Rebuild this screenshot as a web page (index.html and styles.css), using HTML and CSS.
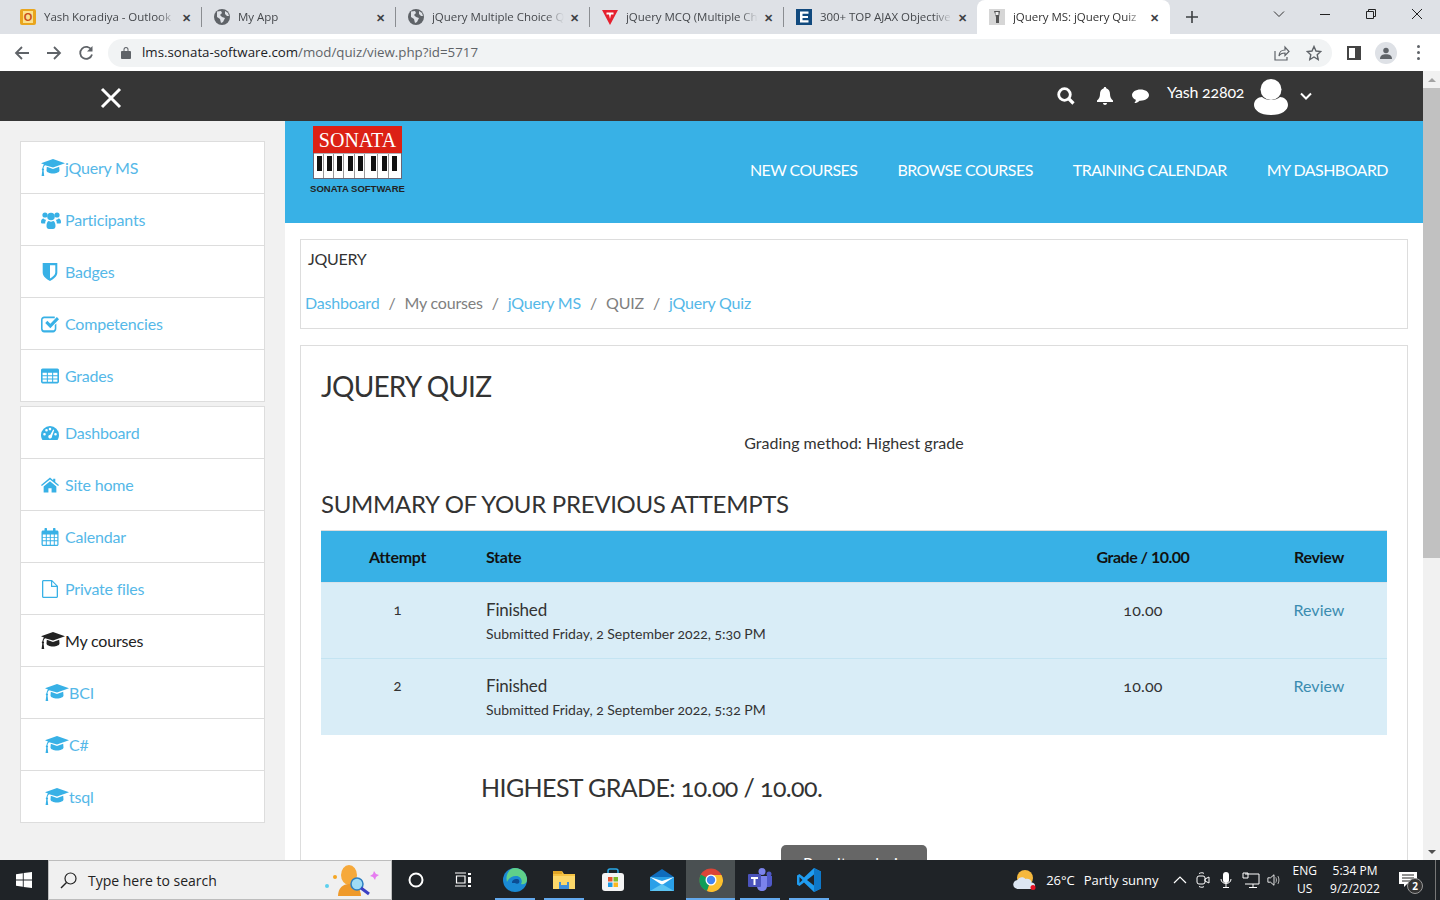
FILE: index.html
```html
<!DOCTYPE html>
<html lang="en">
<head>
    <meta charset="UTF-8">
    <title>jQuery MS: jQuery Quiz</title>
    <link rel="stylesheet" href="styles.css">
</head>
<body>
    <!-- Icon sprite -->
    <svg class="sprite">
        <symbol id="i-cap" viewBox="0 0 24 18"><path d="M12 0 0 4.200l3 1.200C1.900 6.500 1.600 8 1.500 9.300 1 9.600.8 10 .8 10.500c0 .4.200.8.500 1L.6 17h2.600l-.6-5.500c.3-.2.500-.6.500-1 0-.5-.2-.9-.6-1.100.1-1 .4-2.300 1.600-3.200L12 8.500l12-4.300zM12 10 5.800 7.700 5.500 11.500c0 1.600 3 3 6.500 3s6.500-1.400 6.500-3l-.3-3.800z"/></symbol>
        <symbol id="i-users" viewBox="0 0 20 18"><circle cx="4" cy="4" r="2.600"/><circle cx="16" cy="4" r="2.600"/><circle cx="10" cy="5.500" r="3.800"/><path d="M0 11c0-2 1-3.500 2.500-3.500.8.800 1.500 1.200 2.700 1.300-.6 1-1 2-1 3.700H1.500C.5 12.500 0 12 0 11zM20 11c0-2-1-3.500-2.500-3.500-.8.800-1.500 1.200-2.700 1.300.6 1 1 2 1 3.700h2.700c1 0 1.500-.5 1.500-1.500zM5.500 15c0-3 1-5 2.500-5 1.200 1 2.800 1 4 0 1.500 0 2.500 2 2.500 5 0 2-1 3-2.500 3H8c-1.500 0-2.500-1-2.500-3z"/></symbol>
        <symbol id="i-shield" viewBox="0 0 14 16"><path d="M.5 0h13v8.500c0 3.500-3.500 6-6.500 7.500C4 14.500.5 12 .5 8.500zM7 2v11.800c2.300-1.300 4.700-3.200 4.700-5.300V2z"/></symbol>
        <symbol id="i-check" viewBox="0 0 17 16"><path d="M3 1h10v1.500H3c-.8 0-1.500.7-1.500 1.500v8.500c0 .8.700 1.500 1.500 1.500h8.500c.8 0 1.500-.7 1.500-1.500V9l1.500-1.500v5C14.500 14.400 13 16 11.500 16H3c-1.700 0-3-1.500-3-3.500V4c0-1.700 1.300-3 3-3zM4 7l2-2 2.800 2.800L15 1.500l2 2L8.800 12z"/></symbol>
        <symbol id="i-table" viewBox="0 0 17 14"><path d="M1.500 0h14c.8 0 1.500.7 1.500 1.500v11c0 .8-.7 1.500-1.500 1.500h-14C.7 14 0 13.300 0 12.500v-11C0 .7.700 0 1.500 0zM1.500 4v2.200h4V4zm5 0v2.200h4V4zm5 0v2.200h4V4zm-10 3.200v2.100h4V7.200zm5 0v2.100h4V7.200zm5 0v2.100h4V7.200zm-10 3.100v2.200h4v-2.200zm5 0v2.200h4v-2.200zm5 0v2.200h4v-2.200z"/></symbol>
        <symbol id="i-gauge" viewBox="0 0 18 14"><path d="M9 0a9 9 0 0 1 9 9c0 2-.6 3.600-1.500 5h-15C.6 12.600 0 11 0 9a9 9 0 0 1 9-9zM3.500 7a1.300 1.300 0 1 0 0 2.600 1.300 1.300 0 0 0 0-2.600zM5.500 3a1.300 1.300 0 1 0 0 2.600 1.300 1.300 0 0 0 0-2.600zM9 1.800a1.300 1.300 0 1 0 0 2.600 1.300 1.300 0 0 0 0-2.600zM14.500 7a1.300 1.300 0 1 0 0 2.600 1.300 1.300 0 0 0 0-2.600zM12.200 3.500 9.300 8.800c-1.200 0-2 .8-2 1.900 0 1 .8 1.800 1.900 1.800s2-1 1.800-2.200l2.200-6.400z" fill-rule="evenodd"/></symbol>
        <symbol id="i-home" viewBox="0 0 17 14"><path d="M8.500 0l3 2.500V1h2v3.200L17 7l-.8 1-7.700-6.300L.8 8 0 7zM2.500 8.300l6-4.900 6 4.900V14H10v-4H7v4H2.500z"/></symbol>
        <symbol id="i-cal" viewBox="0 0 17 18"><path d="M1.500 2.500H3V1a1 1 0 0 1 2.500 0v1.500h6V1A1 1 0 0 1 14 1v1.500h1.500c.8 0 1.500.7 1.500 1.500v12.500c0 .8-.7 1.500-1.500 1.500h-14C.7 18 0 17.300 0 16.500V4c0-.8.700-1.500 1.500-1.500zM1.300 6.500v2.400h3V6.500zm4 0v2.400h3V6.500zm4 0v2.400h3V6.500zm4 0v2.400h2.500V6.500zm-12 3.300v2.500h3V9.800zm4 0v2.500h3V9.800zm4 0v2.500h3V9.800zm4 0v2.500h2.500V9.800zm-12 3.400v3.500h3v-3.500zm4 0v3.500h3v-3.500zm4 0v3.500h3v-3.500zm4 0v3.500h2.500v-3.500z" fill-rule="evenodd"/></symbol>
        <symbol id="i-file" viewBox="0 0 16 18"><path d="M1.500 0H10l6 6v10.500c0 .8-.7 1.500-1.500 1.500h-13C.7 18 0 17.300 0 16.500v-15C0 .7.700 0 1.500 0zm0 1.300c-.1 0-.2.100-.2.200v15c0 .1.100.2.200.2h13c.1 0 .2-.1.200-.2V7H9V1.300zm8.700.4v4h4z" fill-rule="evenodd"/></symbol>
        <symbol id="i-globe" viewBox="0 0 16 16"><circle cx="8" cy="8" r="8" fill="#5f6368"/><path d="M3 2.500 7 2l1 2-2 2 2 2 3 1-2 4-2 1-1-4-3-2zM11 2l3 2 1 3-2 0-2-2z" fill="#dee1e6"/></symbol>
    </svg>

    <!-- Browser tabs -->
    <div class="tabstrip">
        <div class="tab">
            <svg class="favicon" viewBox="0 0 16 16"><rect width="16" height="16" rx="2" fill="#e9a51d"/><rect x="3" y="2" width="10" height="12" fill="#fbe08b"/><text x="8" y="12" text-anchor="middle" class="fav-o">O</text></svg>
            <span class="tab-title">Yash Koradiya - Outlook</span><span class="tab-x">✕</span>
        </div>
        <div class="tab">
            <svg class="favicon"><use href="#i-globe"/></svg>
            <span class="tab-title">My App</span><span class="tab-x">✕</span>
        </div>
        <div class="tab">
            <svg class="favicon"><use href="#i-globe"/></svg>
            <span class="tab-title">jQuery Multiple Choice Q</span><span class="tab-x">✕</span>
        </div>
        <div class="tab">
            <svg class="favicon" viewBox="0 0 16 16"><path d="M0 1h16L8 16z" fill="#e5202e"/><path d="M4.500 3.500h7v2H9L8 10 7 5.500H4.500z" fill="#fff"/></svg>
            <span class="tab-title">jQuery MCQ (Multiple Ch</span><span class="tab-x">✕</span>
        </div>
        <div class="tab no-sep">
            <svg class="favicon" viewBox="0 0 16 16"><rect width="16" height="16" fill="#114a7e"/><path d="M4 2.500h8.500v2.200H6.500v2.200h5.500v2.200H6.500v2.200h6v2.200H4z" fill="#fff"/></svg>
            <span class="tab-title">300+ TOP AJAX Objective</span><span class="tab-x">✕</span>
        </div>
        <div class="tab active">
            <svg class="favicon" viewBox="0 0 16 16"><rect width="16" height="16" fill="#d6d6d6"/><path d="M5 2h6l-1 6v6H7V8z" fill="#555"/><rect x="6.500" y="3" width="3" height="3" fill="#eee"/></svg>
            <span class="tab-title">jQuery MS: jQuery Quiz</span><span class="tab-x">✕</span>
        </div>
        <svg class="newtab" viewBox="0 0 12 12"><path d="M6 0v12M0 6h12" stroke="#3c4043" stroke-width="1.600"/></svg>
        <div class="win-controls">
            <svg viewBox="0 0 12 12"><path d="M1 3.500 6 8.500l5-5" fill="none" stroke="#333"/></svg>
            <svg viewBox="0 0 12 12"><path d="M1 6.500h10" stroke="#222"/></svg>
            <svg viewBox="0 0 12 12"><path d="M1.500 3.500h7v7h-7zM3.500 3.500v-2h7v7h-2" fill="none" stroke="#222"/></svg>
            <svg viewBox="0 0 12 12"><path d="M1 1l10 10M11 1 1 11" stroke="#222"/></svg>
        </div>
    </div>

    <!-- Address bar -->
    <div class="toolbar">
        <svg class="tool" viewBox="0 0 16 16"><path d="M15 8H2M8 2 2 8l6 6" fill="none" stroke="#5f6368" stroke-width="1.800"/></svg>
        <svg class="tool" viewBox="0 0 16 16"><path d="M1 8h13M8 2l6 6-6 6" fill="none" stroke="#5f6368" stroke-width="1.800"/></svg>
        <svg class="tool" viewBox="0 0 16 16"><path d="M13.500 5A6 6 0 1 0 14 9.500" fill="none" stroke="#5f6368" stroke-width="1.800"/><path d="M14.500 1v5.500H9z" fill="#5f6368"/></svg>
        <div class="omnibox">
            <svg class="lock" viewBox="0 0 10 13"><path d="M2.500 5V3.500a2.500 2.500 0 0 1 5 0V5H9c.5 0 1 .5 1 1v6c0 .5-.5 1-1 1H1c-.5 0-1-.5-1-1V6c0-.5.500-1 1-1zm1 0h3V3.500a1.500 1.500 0 0 0-3 0z" fill="#5f6368"/></svg>
            <span class="url"><b>lms.sonata-software.com</b>/mod/quiz/view.php?id=5717</span>
            <svg class="omni-icon share" viewBox="0 0 16 16"><path d="M1 6v9h12v-3M5 11c0-4 3-6 6-6V2l4 4.500-4 4V8c-3 0-5 1-6 3z" fill="none" stroke="#5f6368" stroke-width="1.200"/></svg>
            <svg class="omni-icon" viewBox="0 0 16 16"><path d="M8 1.500l2 4.500 4.800.5-3.600 3.200 1 4.800L8 12l-4.200 2.500 1-4.800L1.200 6.500 6 6z" fill="none" stroke="#5f6368" stroke-width="1.400"/></svg>
        </div>
        <svg class="panel" viewBox="0 0 14 14"><path d="M0 0h14v14H0zM2 2v10h6V2z" fill="#444" fill-rule="evenodd"/></svg>
        <div class="profile"><svg viewBox="0 0 14 14"><circle cx="7" cy="4" r="3.200" fill="#5f6368"/><path d="M0 14c0-4 3-5.500 7-5.500s7 1.500 7 5.500z" fill="#5f6368"/></svg></div>
        <div class="kebab"><i></i><i></i><i></i></div>
    </div>

    <!-- Page in the browser window -->
    <div class="viewport">
        <div class="page">
            <div class="topbar">
                <svg class="close-nav" viewBox="0 0 22 22"><path d="M2 2l18 18M20 2 2 20" stroke="#fff" stroke-width="3"/></svg>
                <div class="user-menu">
                    <svg class="top-icon" viewBox="0 0 18 18"><circle cx="7.500" cy="7.500" r="5.800" fill="none" stroke="#fff" stroke-width="2.800"/><path d="M11.500 11.500 16.500 16.500" stroke="#fff" stroke-width="3.200"/></svg>
                    <svg class="top-icon bell" viewBox="0 0 16 18"><path d="M8 0c.8 0 1.200.5 1.200 1.200C12 2 13 4.500 13 7c0 3 1 5 3 6.500V15H0v-1.500C2 12 3 10 3 7c0-2.500 1-5 3.800-5.800C6.800.5 7.200 0 8 0zM6 16h4c0 1.200-1 2-2 2s-2-.8-2-2z" fill="#fff"/></svg>
                    <svg class="top-icon chat" viewBox="0 0 18 16"><path d="M9 1c5 0 9 2.500 9 6s-4 6-9 6h-1c-1.500 1.500-3.500 2.500-5.500 2.500C3.500 14.500 4 13.500 4 12 1.500 11 0 9.200 0 7c0-3.500 4-6 9-6z" fill="#fff"/></svg>
                    <span class="user-name">Yash 22802</span>
                    <svg class="avatar" viewBox="0 0 34 36"><circle cx="17" cy="10.500" r="10.500" fill="#fff"/><path d="M0 26c0-5 4-8 8-8 2 2 5.500 3 9 3s7-1 9-3c4 0 8 3 8 8s-6 10-17 10S0 31 0 26z" fill="#fff"/></svg>
                    <svg class="caret" viewBox="0 0 12 8"><path d="M1 1.500l5 5 5-5" fill="none" stroke="#fff" stroke-width="2"/></svg>
                </div>
            </div>

            <div class="page-body">
                <aside class="sidebar">
                    <ul class="nav-block">
                        <li class="nav-item"><svg class="ni cap"><use href="#i-cap"/></svg>jQuery MS</li>
                        <li class="nav-item"><svg class="ni users"><use href="#i-users"/></svg><span class="gap">Participants</span></li>
                        <li class="nav-item"><svg class="ni"><use href="#i-shield"/></svg><span class="gap">Badges</span></li>
                        <li class="nav-item"><svg class="ni"><use href="#i-check"/></svg><span class="gap">Competencies</span></li>
                        <li class="nav-item"><svg class="ni"><use href="#i-table"/></svg><span class="gap">Grades</span></li>
                    </ul>
                    <ul class="nav-block">
                        <li class="nav-item"><svg class="ni"><use href="#i-gauge"/></svg><span class="gap">Dashboard</span></li>
                        <li class="nav-item"><svg class="ni"><use href="#i-home"/></svg><span class="gap">Site home</span></li>
                        <li class="nav-item"><svg class="ni"><use href="#i-cal"/></svg><span class="gap">Calendar</span></li>
                        <li class="nav-item"><svg class="ni"><use href="#i-file"/></svg><span class="gap">Private files</span></li>
                        <li class="nav-item dark"><svg class="ni cap"><use href="#i-cap"/></svg>My courses</li>
                        <li class="nav-item sub"><svg class="ni cap"><use href="#i-cap"/></svg>BCI</li>
                        <li class="nav-item sub"><svg class="ni cap"><use href="#i-cap"/></svg>C#</li>
                        <li class="nav-item sub"><svg class="ni cap"><use href="#i-cap"/></svg>tsql</li>
                    </ul>
                </aside>

                <div class="content">
                    <div class="hero">
                        <div class="logo">
                            <div class="logo-red">SONATA</div>
                            <svg class="logo-keys" viewBox="0 0 89 26"><rect x=".5" width="88" height="25.500" fill="#fff" stroke="#667"/><path d="M10.500 1v24M20.500 1v24M30.500 1v24M41.500 1v24M51.500 1v24M64.500 1v24M75.500 1v24" stroke="#999"/><path d="M4 3h5v15H4zM14 3h5v15h-5zM24 3h5v15h-5zM35 3h5v15h-5zM45 3h5v15h-5zM58 3h5v15h-5zM69 3h5v15h-5zM79 3h5v15h-5z" fill="#111"/></svg>
                            <div class="logo-name">SONATA SOFTWARE</div>
                        </div>
                        <nav class="main-nav">
                            <a>NEW COURSES</a>
                            <a>BROWSE COURSES</a>
                            <a>TRAINING CALENDAR</a>
                            <a>MY DASHBOARD</a>
                        </nav>
                    </div>

                    <div class="crumb-box">
                        <div class="course-name">JQUERY</div>
                        <div class="crumbs">
                            <a>Dashboard</a><span class="sep">/</span><span>My courses</span><span class="sep">/</span><a>jQuery MS</a><span class="sep">/</span><span>QUIZ</span><span class="sep">/</span><a>jQuery Quiz</a>
                        </div>
                    </div>

                    <div class="main-box">
                        <h2 class="quiz-title">JQUERY QUIZ</h2>
                        <p class="method">Grading method: Highest grade</p>
                        <h3 class="summary-title">SUMMARY OF YOUR PREVIOUS ATTEMPTS</h3>
                        <table class="attempts">
                            <thead>
                                <tr>
                                    <th class="c-attempt">Attempt</th>
                                    <th class="c-state">State</th>
                                    <th class="c-grade">Grade / 10.00</th>
                                    <th class="c-review">Review</th>
                                </tr>
                            </thead>
                            <tbody>
                                <tr>
                                    <td class="c-attempt">1</td>
                                    <td class="c-state">Finished<span class="when">Submitted Friday, 2 September 2022, 5:30 PM</span></td>
                                    <td class="c-grade">10.00</td>
                                    <td class="c-review"><a>Review</a></td>
                                </tr>
                                <tr>
                                    <td class="c-attempt">2</td>
                                    <td class="c-state">Finished<span class="when">Submitted Friday, 2 September 2022, 5:32 PM</span></td>
                                    <td class="c-grade">10.00</td>
                                    <td class="c-review"><a>Review</a></td>
                                </tr>
                            </tbody>
                        </table>
                        <h3 class="highest">HIGHEST GRADE: 10.00 / 10.00.</h3>
                        <div class="result-wrap"><button class="result-btn">Result analysis</button></div>
                    </div>
                </div>
            </div>
        </div>
        <div class="scrollbar">
            <div class="sb-btn"><i class="arrow-up"></i></div>
            <div class="sb-thumb"></div>
            <div class="sb-btn"><i class="arrow-down"></i></div>
        </div>
    </div>

    <!-- Windows taskbar -->
    <div class="taskbar">
        <svg class="start" viewBox="0 0 16 16"><path d="M0 2.200 6.800 1.200v6.300H0zM7.700 1.100 16 0v7.500H7.700zM0 8.400h6.800v6.400L0 13.800zM7.700 8.400H16V16l-8.300-1.100z" fill="#fff"/></svg>
        <div class="searchbox">
            <svg class="search-glass" viewBox="0 0 17 17"><circle cx="10.500" cy="6.500" r="5.500" fill="none" stroke="#222" stroke-width="1.200"/><path d="M6.500 10.500 1 16" stroke="#222" stroke-width="1.500"/></svg>
            <span>Type here to search</span>
            <svg class="search-art" viewBox="0 0 56 32"><circle cx="3" cy="22" r="2" fill="#5cd0ee"/><circle cx="11" cy="13" r="2" fill="#f5a623"/><path d="M50 7l2 3 3 1-3 2-1 3-2-3-3-1 3-2z" fill="#e67cf0"/><ellipse cx="25" cy="11" rx="8" ry="10" fill="#f6a93b"/><path d="M14 32c0-8 5-12 11-12s12 4 12 12z" fill="#ef9a2b"/><circle cx="33" cy="20" r="6" fill="#9fdcf5" stroke="#2d7fc1" stroke-width="1.500"/><path d="M37 24l8 6" stroke="#3b3fc4" stroke-width="3"/></svg>
        </div>
        <svg class="tb-plain" viewBox="0 0 16 16"><circle cx="8" cy="8" r="6.500" fill="none" stroke="#fff" stroke-width="2"/></svg>
        <svg class="tb-plain" viewBox="0 0 16 16"><path d="M0 1h11M0 14h11M1.500 4h8.500v7H1.500z" fill="none" stroke="#fff" stroke-width="1.200"/><path d="M13 1h3v2h-3zM13 5h3v6h-3zM13 13h3v2h-3z" fill="#fff"/></svg>
        <div class="tb-apps">
            <div class="tb-app open">
                <svg viewBox="0 0 24 24"><circle cx="12" cy="12" r="12" fill="#1a8ad4"/><path d="M12 0a12 12 0 0 1 12 12c0 3-3 5-6 4 2-3 0-8-5-8C8 8 5 11 4 14 2 7 6 0 12 0z" fill="#5fd08a"/><path d="M9 15c0-3 2-4 5-4 2 0 3 2 2 4-1 1-3 1-4 0z" fill="#0c4d92"/></svg>
            </div>
            <div class="tb-app open">
                <svg viewBox="0 0 24 24"><path d="M1 3h9l2 3h11v15H1z" fill="#f5c242"/><path d="M1 3h9v3H1z" fill="#e0a526"/><path d="M1 8h22v13H1z" fill="#fcd86a"/><path d="M7 14h10v7H7z" fill="#3f8edb"/><path d="M9 14h6v3H9z" fill="#fcd86a"/></svg>
            </div>
            <div class="tb-app">
                <svg viewBox="0 0 24 24"><path d="M7 6V3c0-1 1-2 2-2h6c1 0 2 1 2 2v3" fill="none" stroke="#29a9e8" stroke-width="1.500"/><rect x="1" y="5" width="22" height="18" rx="3" fill="#f4f4f4"/><rect x="7" y="9" width="4.500" height="4.500" fill="#e8542f"/><rect x="12.500" y="9" width="4.500" height="4.500" fill="#7fba2a"/><rect x="7" y="14.500" width="4.500" height="4.500" fill="#1d9be8"/><rect x="12.500" y="14.500" width="4.500" height="4.500" fill="#fbb820"/></svg>
            </div>
            <div class="tb-app">
                <svg viewBox="0 0 24 24"><path d="M0 9 12 1l12 8v3H0z" fill="#0f6cbd"/><path d="M0 9h24v14H0z" fill="#2aa0e8"/><path d="M0 9l12 8 12-8-12 4z" fill="#fff"/><path d="M0 23 12 16l12 7z" fill="#5cc4f2"/></svg>
            </div>
            <div class="tb-app active open">
                <svg viewBox="0 0 24 24"><circle cx="12" cy="12" r="11.500" fill="#db4437"/><path d="M12 12 1.900 6.400A11.500 11.500 0 0 0 8 23z" fill="#0f9d58"/><path d="M12 12 8 23A11.500 11.500 0 0 0 22.500 7H12z" fill="#fbc02d"/><circle cx="12" cy="12" r="5.500" fill="#fff"/><circle cx="12" cy="12" r="4.200" fill="#4285f4"/></svg>
            </div>
            <div class="tb-app open">
                <svg viewBox="0 0 24 24"><circle cx="14" cy="3.500" r="3.500" fill="#7b83eb"/><circle cx="21" cy="6" r="2.500" fill="#5059c9"/><path d="M9 8h10v10c0 3-2 5-5 5s-5-2-5-5z" fill="#7b83eb"/><path d="M19 8h5v8c0 2-1.500 3-3 3h-2z" fill="#5059c9"/><rect x="0" y="6" width="13" height="13" rx="1" fill="#4b53bc"/><path d="M3 9h7v2H7.500v6h-2v-6H3z" fill="#fff"/></svg>
            </div>
            <div class="tb-app open">
                <svg viewBox="0 0 24 24"><path d="M17 0l7 3.500v17L17 24 7 14.500 2.500 18 0 16.500v-9L2.500 6 7 9.500z" fill="#1f9cf0"/><path d="M17 0l7 3.500v17L17 24z" fill="#0e78c9"/><path d="M17 6.500v11L10 12z" fill="#202428"/><path d="M2.500 9v6l3-3z" fill="#202428"/></svg>
            </div>
        </div>
        <div class="tray">
            <svg class="weather" viewBox="0 0 24 22"><circle cx="12" cy="9" r="8" fill="#f5b83d"/><path d="M5 20a4.500 4.500 0 0 1-.5-9c1-3 6-4 8-1 3-1 6 1 6 3.500 2.500 0 4 2 3.500 4s-2 2.500-3 2.500z" fill="#dce6f2"/><circle cx="20" cy="18.500" r="2.500" fill="#e81123"/></svg>
            <span class="temp">26°C</span>
            <span class="sky">Partly sunny</span>
            <svg class="tray-i up" viewBox="0 0 14 14"><path d="M1 10l6-6 6 6" fill="none" stroke="#fff" stroke-width="1.200"/></svg>
            <svg class="tray-i" viewBox="0 0 14 16"><rect x="1" y="4" width="8" height="8" rx="2" fill="none" stroke="#fff"/><path d="M9 7l4-2v6l-4-2zM3 1.500c2-1 4-1 5 0M3 14.500c2 1 4 1 5 0" fill="none" stroke="#fff"/></svg>
            <svg class="tray-i" viewBox="0 0 14 16"><rect x="4" y="0" width="6" height="11" rx="3" fill="#fff"/><path d="M2 7c0 6 10 6 10 0M7 12v3M4 15.500h6" fill="none" stroke="#fff"/></svg>
            <svg class="tray-i wide" viewBox="0 0 18 16"><path d="M3 2h14v10H3M11 12v3M7 15.500h8M1 1h5v5H1z" fill="none" stroke="#fff"/></svg>
            <svg class="tray-i" viewBox="0 0 16 16"><path d="M1 5.500h3L8 2v12l-4-3.500H1z" fill="none" stroke="#fff"/><path d="M10 5c1 2 1 4 0 6M12.500 3.500c1.500 3 1.500 6 0 9" fill="none" stroke="#ccc"/></svg>
            <div class="lang">ENG<br>US</div>
            <div class="clock">5:34 PM<br>9/2/2022</div>
            <div class="notify">
                <svg viewBox="0 0 18 16"><path d="M0 0h18v12H8l-3 3v-3H0z" fill="#fff"/><path d="M3 3h12M3 6h12M3 9h8" stroke="#222"/></svg>
                <span class="notify-count">2</span>
            </div>
            <div class="desk-line"></div>
        </div>
    </div>
</body>
</html>
```

FILE: styles.css
```css
* {
    box-sizing: border-box;
}
body {
    margin: 0;
    height: 900px;
    overflow: hidden;
    display: flex;
    flex-direction: column;
    font-family: Lato, "Open Sans", sans-serif;
    color: #333;
    background-color: #fff;
}
.sprite {
    display: none;
}

/* browser tabs */
.tabstrip {
    height: 34px;
    flex-shrink: 0;
    background-color: #dee1e6;
    display: flex;
    align-items: center;
    padding-left: 8px;
    font-family: "Open Sans", sans-serif;
    font-size: 11.5px;
    letter-spacing: -0.05px;
    color: #45484c;
}
.tab {
    width: 194px;
    height: 34px;
    padding-left: 12px;
    display: flex;
    align-items: center;
    flex-shrink: 0;
}
.tab::after {
    content: "";
    width: 1px;
    height: 20px;
    margin-left: 5px;
    background-color: #8a8d91;
    flex-shrink: 0;
}
.tab.no-sep::after {
    background-color: transparent;
}
.tab.active {
    margin-left: -1px;
    width: 193px;
    background-color: #fff;
    border-radius: 8px 8px 0 0;
    color: #333;
}
.tab.active::after {
    background-color: transparent;
}
.favicon {
    width: 16px;
    height: 16px;
    flex-shrink: 0;
    margin-right: 8px;
}
.fav-o {
    font-family: "Liberation Sans", sans-serif;
    font-size: 11px;
    font-weight: bold;
    fill: #c8501a;
}
.tab-title {
    flex: 1;
    min-width: 0;
    padding-bottom: 2px;
    white-space: nowrap;
    overflow: hidden;
    -webkit-mask-image: linear-gradient(to left, transparent 0, #000 18px);
    mask-image: linear-gradient(to left, transparent 0, #000 18px);
}
.tab-x {
    width: 20px;
    text-align: center;
    font-size: 11px;
    font-weight: bold;
    color: #3c4043;
    flex-shrink: 0;
}
.newtab {
    width: 12px;
    height: 12px;
    margin-left: 16px;
    flex-shrink: 0;
}
.win-controls {
    margin-left: auto;
    display: flex;
    align-items: center;
    gap: 34px;
    padding-right: 17px;
    height: 28px;
    align-self: flex-start;
}
.win-controls svg {
    width: 12px;
    height: 12px;
}

/* address bar */
.toolbar {
    height: 37px;
    flex-shrink: 0;
    display: flex;
    align-items: center;
    padding-left: 14px;
    background-color: #fff;
}
.tool {
    width: 16px;
    height: 16px;
    margin-right: 16px;
    flex-shrink: 0;
}
.omnibox {
    width: 1224px;
    height: 28px;
    margin-left: -2px;
    border-radius: 14px;
    background-color: #f1f3f4;
    display: flex;
    align-items: center;
    padding: 0 10px 0 13px;
    flex-shrink: 0;
}
.lock {
    width: 10px;
    height: 13px;
    margin-right: 11px;
}
.url {
    flex: 1;
    padding-bottom: 2px;
    font-family: "Open Sans", sans-serif;
    font-size: 13.3px;
    color: #5f6368;
}
.url b {
    font-weight: normal;
    color: #202124;
}
.omni-icon {
    width: 16px;
    height: 16px;
}
.omni-icon.share {
    margin-right: 16px;
}
.panel {
    width: 14px;
    height: 14px;
    margin-left: 15px;
}
.profile {
    width: 22px;
    height: 22px;
    margin-left: 14px;
    border-radius: 50%;
    background-color: #dee1e6;
    display: flex;
    align-items: center;
    justify-content: center;
}
.profile svg {
    width: 12px;
    height: 12px;
}
.kebab {
    margin-left: 20px;
    display: flex;
    flex-direction: column;
    gap: 3px;
}
.kebab i {
    width: 3px;
    height: 3px;
    border-radius: 50%;
    background-color: #5f6368;
}

/* page */
.viewport {
    flex: 1;
    min-height: 0;
    display: flex;
    overflow: hidden;
}
.page {
    width: 1423px;
    flex-shrink: 0;
    overflow: hidden;
}
.scrollbar {
    width: 17px;
    background-color: #f1f1f1;
    display: flex;
    flex-direction: column;
}
.sb-btn {
    height: 17px;
    display: flex;
    align-items: center;
    justify-content: center;
}
.sb-btn:last-child {
    margin-top: auto;
}
.sb-thumb {
    height: 470px;
    background-color: #c1c1c1;
}
.arrow-up,
.arrow-down {
    width: 0;
    height: 0;
    border-left: 4px solid transparent;
    border-right: 4px solid transparent;
}
.arrow-up {
    border-bottom: 4px solid #a3a3a3;
}
.arrow-down {
    border-top: 4px solid #505050;
}
.topbar {
    height: 50px;
    background-color: #363636;
    display: flex;
    align-items: center;
    padding-left: 100px;
}
.close-nav {
    width: 22px;
    height: 22px;
    margin-top: 4px;
}
.user-menu {
    margin-left: auto;
    display: flex;
    align-items: center;
    padding-right: 111px;
    color: #fff;
}
.top-icon {
    width: 18px;
    height: 18px;
    margin-right: 22px;
}
.bell {
    width: 16px;
    margin-right: 19px;
}
.chat {
    margin-right: 18px;
    width: 17px;
}
.user-name {
    font-size: 16px;
    font-variant-numeric: oldstyle-nums;
    letter-spacing: -0.2px;
    width: 87px;
    margin-top: -9px;
    white-space: nowrap;
}
.avatar {
    width: 34px;
    height: 36px;
    margin-top: 2px;
}
.caret {
    width: 12px;
    height: 8px;
    margin-left: 12px;
}
.page-body {
    display: flex;
}

/* sidebar */
.sidebar {
    width: 285px;
    flex-shrink: 0;
    background-color: #f1f1f1;
    padding: 20px 20px 40px;
}
.nav-block {
    list-style: none;
    margin: 0 0 4px;
    padding: 0;
    background-color: #fff;
    border: 1px solid #ddd;
}
.nav-item {
    height: 52px;
    display: flex;
    align-items: center;
    padding-left: 20px;
    border-bottom: 1px solid #ddd;
    font-size: 16px;
    color: #55b8e8;
    letter-spacing: -0.2px;
    fill: #38b1e6;
}
.nav-item:last-child {
    border-bottom: none;
    height: 51px;
}
.nav-item.dark {
    color: #222;
    fill: #222;
}
.nav-item.sub {
    padding-left: 24px;
}
.ni {
    width: 18px;
    height: 18px;
    flex-shrink: 0;
}
.ni.cap {
    width: 24px;
}
.ni.users {
    width: 20px;
    margin-right: -2px;
}
.gap {
    margin-left: 6px;
}

/* hero */
.content {
    flex: 1;
    min-width: 0;
    background-color: #fff;
}
.hero {
    height: 102px;
    background-color: #38b1e6;
    display: flex;
    align-items: flex-start;
    padding: 5px 35px 0 25px;
}
.logo {
    width: 95px;
    display: flex;
    flex-direction: column;
    align-items: center;
}
.logo-red {
    width: 89px;
    height: 27px;
    background-color: #dc2115;
    color: #fff;
    font-family: "Liberation Serif", serif;
    font-size: 20px;
    line-height: 28px;
    text-align: center;
}
.logo-keys {
    width: 89px;
    height: 26px;
    display: block;
}
.logo-name {
    margin-top: 4px;
    font-family: "Liberation Sans", sans-serif;
    font-size: 9.5px;
    font-weight: bold;
    color: #222;
    white-space: nowrap;
}
.main-nav {
    margin-left: auto;
    margin-top: 32px;
    display: flex;
    gap: 40px;
}
.main-nav a {
    color: #fff;
    font-size: 16px;
    line-height: 24px;
    letter-spacing: -0.55px;
    white-space: nowrap;
}

/* breadcrumb */
.crumb-box {
    margin: 16px 15px 16px;
    height: 90px;
    border: 1px solid #ddd;
    padding: 8px 4px;
}
.course-name {
    font-size: 16px;
    line-height: 22px;
    color: #333;
    padding-left: 3px;
    letter-spacing: -0.3px;
}
.crumbs {
    margin-top: 21px;
    font-size: 16px;
    line-height: 24px;
    color: #808080;
    letter-spacing: -0.2px;
}
.crumbs a {
    color: #55b8e8;
}
.sep {
    margin: 0 9px;
}

/* quiz box */
.main-box {
    margin: 0 15px;
    border: 1px solid #ddd;
    padding: 23px 20px 0;
}
.quiz-title {
    margin: 0;
    font-size: 28px;
    line-height: 34px;
    font-weight: normal;
    color: #333;
    letter-spacing: -0.8px;
}
.method {
    margin: 29px 0 0;
    font-size: 16px;
    line-height: 22px;
    text-align: center;
}
.summary-title {
    margin: 34px 0 0;
    font-size: 24px;
    line-height: 32px;
    font-weight: normal;
    letter-spacing: -0.3px;
    white-space: nowrap;
}
.attempts {
    margin-top: 10px;
    width: 1066px;
    table-layout: fixed;
    border-collapse: collapse;
    font-size: 16px;
    color: #333;
}
.attempts th {
    height: 52px;
    background-color: #38b1e6;
    color: #111;
    font-weight: bold;
    letter-spacing: -0.3px;
    border-top: 1px solid #ddd;
    border-bottom: 1px solid #d8e2ea;
}
.attempts td {
    height: 76px;
    background-color: #d9edf7;
    border-bottom: 1px solid #c4e4f2;
    text-align: center;
    vertical-align: top;
    padding-top: 17px;
    font-size: 15px;
    font-variant-numeric: oldstyle-nums;
}
.attempts tr:last-child td {
    border-bottom: none;
}
.attempts .c-attempt {
    width: 153px;
}
.attempts .c-state {
    width: 561px;
    text-align: left;
    padding-left: 12px;
}
.attempts td.c-state {
    padding-top: 16px;
    font-size: 17px;
    line-height: 22px;
    letter-spacing: -0.2px;
}
.attempts .c-grade {
    width: 216px;
}
.attempts th.c-grade {
    letter-spacing: -0.5px;
}
.attempts td.c-grade {
    font-size: 16px;
    letter-spacing: 0.2px;
}
.attempts .c-review {
    width: 136px;
}
.attempts .c-review a {
    color: #3b8cb0;
    font-size: 16px;
}
.when {
    display: block;
    margin-top: 3px;
    font-size: 14px;
    line-height: 20px;
    letter-spacing: 0;
}
.highest {
    margin: 36px 0 0;
    padding-left: 160px;
    font-size: 25px;
    line-height: 32px;
    font-weight: normal;
    letter-spacing: -0.6px;
    font-variant-numeric: oldstyle-nums;
}
.result-wrap {
    margin-top: 42px;
    text-align: center;
}
.result-btn {
    width: 146px;
    height: 36px;
    border: none;
    border-radius: 5px;
    background-color: #666;
    color: #fff;
    font-family: inherit;
    font-size: 16px;
}

/* taskbar */
.taskbar {
    height: 40px;
    flex-shrink: 0;
    background-color: #1f2327;
    display: flex;
    align-items: center;
    color: #fff;
    font-family: "Open Sans", sans-serif;
}
.start {
    width: 16px;
    height: 16px;
    margin: 0 16px;
    flex-shrink: 0;
}
.searchbox {
    width: 344px;
    height: 40px;
    background-color: #f0f0f0;
    border: 1px solid #bdbdbd;
    display: flex;
    align-items: center;
    padding-left: 11px;
    color: #222;
    font-size: 14px;
    flex-shrink: 0;
}
.search-glass {
    width: 17px;
    height: 17px;
    margin-right: 11px;
}
.search-art {
    width: 56px;
    height: 32px;
    margin-left: auto;
    margin-right: 11px;
}
.tb-plain {
    width: 16px;
    height: 16px;
    margin-left: 16px;
    flex-shrink: 0;
}
.tb-plain + .tb-plain {
    margin-left: 31px;
}
.tb-apps {
    display: flex;
    margin-left: 19px;
}
.tb-app {
    width: 49px;
    height: 40px;
    display: flex;
    align-items: center;
    justify-content: center;
    padding-bottom: 1px;
}
.tb-app svg {
    width: 24px;
    height: 24px;
}
.tb-app.open {
    background-image: linear-gradient(#63a9ed, #63a9ed);
    background-size: 40px 2px;
    background-position: center bottom;
    background-repeat: no-repeat;
}
.tb-app.active {
    background-color: #4a5052;
    background-size: 100% 2px;
}
.tray {
    margin-left: auto;
    height: 40px;
    display: flex;
    align-items: center;
    font-size: 13px;
}
.weather {
    width: 24px;
    height: 22px;
    margin-right: 9px;
}
.temp {
    margin-right: 9px;
}
.sky {
    margin-right: 14px;
}
.tray-i {
    width: 14px;
    height: 16px;
    margin-right: 9px;
}
.tray-i.up {
    margin-right: 9px;
}
.tray-i.wide {
    width: 18px;
    margin-right: 7px;
}
.lang,
.clock {
    font-size: 12px;
    line-height: 18px;
    text-align: center;
}
.lang {
    margin-left: 3px;
    margin-right: 8px;
}
.clock {
    width: 60px;
    margin-right: 14px;
}
.notify {
    display: flex;
    position: relative;
}
.notify svg {
    width: 18px;
    height: 16px;
}
.notify-count {
    position: absolute;
    left: 8px;
    top: 6px;
    width: 16px;
    height: 16px;
    border-radius: 50%;
    border: 1px solid #999;
    background-color: #333;
    font-size: 10px;
    line-height: 14px;
    text-align: center;
    font-weight: bold;
}
.desk-line {
    width: 5px;
    height: 40px;
    margin-left: 18px;
    border-left: 1px solid #777;
}
```
